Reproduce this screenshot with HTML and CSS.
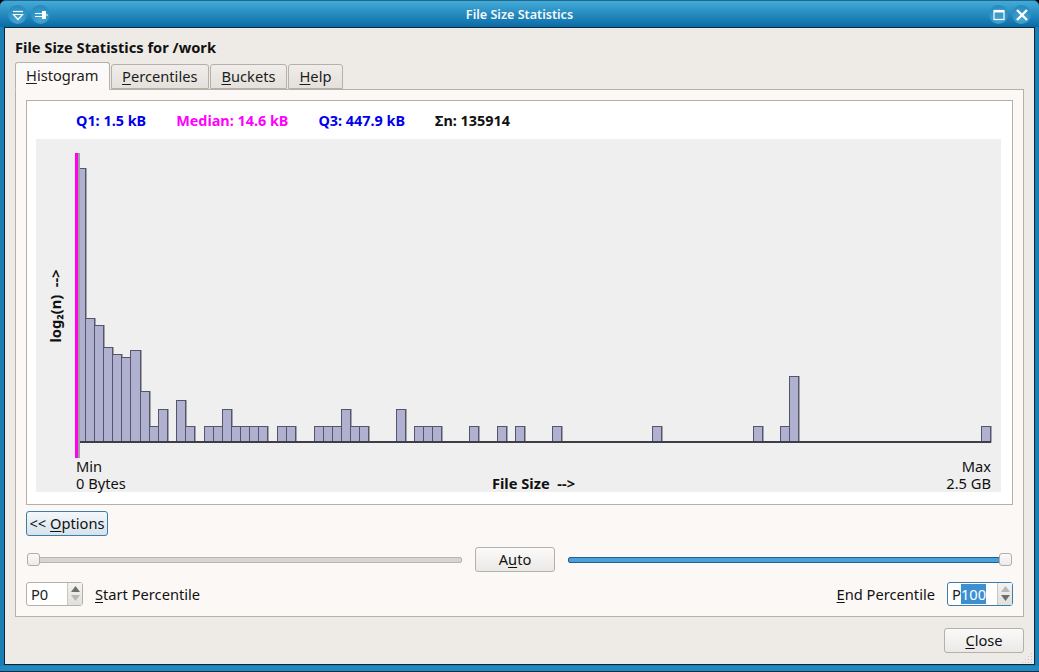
FILE: index.html
```html
<!DOCTYPE html>
<html lang="en">
<head>
<meta charset="utf-8">
<title>File Size Statistics</title>
<link rel="stylesheet" href="styles.css">
</head>
<body>
<div class="window">
  <header class="titlebar">
    <div class="wm-group">
      <span class="wm-btn"><svg width="14" height="14" viewBox="0 0 14 14"><path class="wm-line" d="M2 3.5h10"/><path class="wm-line" d="M2.5 6.5h9L7 11.5z"/></svg></span>
      <span class="wm-btn"><svg width="16" height="14" viewBox="0 0 16 14"><path class="wm-fill" d="M9 3h4v8H9z"/><path class="wm-line" d="M2 5.5h7M2 8.5h7M13 7h2"/></svg></span>
    </div>
    <div class="title">File Size Statistics</div>
    <div class="wm-group">
      <span class="wm-btn"><svg width="14" height="14" viewBox="0 0 14 14"><rect class="wm-line" x="2" y="2.5" width="10" height="9"/><path class="wm-line wm-thick" d="M2 3.5h10"/></svg></span>
      <span class="wm-btn"><svg width="14" height="14" viewBox="0 0 14 14"><path class="wm-x" d="M2 2l10 10M12 2L2 12"/></svg></span>
    </div>
  </header>

  <main class="client">
    <h1 class="heading">File Size Statistics for /work</h1>

    <nav class="tabs">
      <span class="tab tab-active"><span><u>H</u>istogram</span></span>
      <span class="tab"><span><u>P</u>ercentiles</span></span>
      <span class="tab"><span><u>B</u>uckets</span></span>
      <span class="tab"><span><u>H</u>elp</span></span>
    </nav>

    <section class="pane">
      <div class="plot-frame">
        <div class="stats">
          <span class="stat-blue">Q1: 1.5 kB</span>
          <span class="stat-magenta">Median: 14.6 kB</span>
          <span class="stat-blue">Q3: 447.9 kB</span>
          <span class="stat-black">Σn: 135914</span>
        </div>
        <div class="chart-wrap">
          <svg class="chart" width="965" height="353" viewBox="36 139 965 353">
            <g class="bars">
              <rect class="ghost" x="78" y="153" width="1" height="305"/>
              <rect x="78.5" y="168.5" width="7" height="273.5"/>
              <rect x="85.5" y="318.5" width="9" height="123.5"/>
              <rect x="94.5" y="325.5" width="9" height="116.5"/>
              <rect x="103.5" y="347.5" width="9" height="94.5"/>
              <rect x="112.5" y="354.5" width="9" height="87.5"/>
              <rect x="121.5" y="357.5" width="9" height="84.5"/>
              <rect x="130.5" y="350.5" width="10" height="91.5"/>
              <rect x="140.5" y="391.5" width="9" height="50.5"/>
              <rect x="149.5" y="426.5" width="9" height="15.5"/>
              <rect x="158.5" y="409.5" width="9" height="32.5"/>
              <rect x="176.5" y="400.5" width="9" height="41.5"/>
              <rect x="185.5" y="426.5" width="9" height="15.5"/>
              <rect x="204.5" y="426.5" width="9" height="15.5"/>
              <rect x="213.5" y="426.5" width="9" height="15.5"/>
              <rect x="222.5" y="409.5" width="9" height="32.5"/>
              <rect x="231.5" y="426.5" width="9" height="15.5"/>
              <rect x="240.5" y="426.5" width="9" height="15.5"/>
              <rect x="249.5" y="426.5" width="9" height="15.5"/>
              <rect x="258.5" y="426.5" width="9" height="15.5"/>
              <rect x="277.5" y="426.5" width="9" height="15.5"/>
              <rect x="286.5" y="426.5" width="9" height="15.5"/>
              <rect x="314.5" y="426.5" width="9" height="15.5"/>
              <rect x="323.5" y="426.5" width="9" height="15.5"/>
              <rect x="332.5" y="426.5" width="9" height="15.5"/>
              <rect x="341.5" y="409.5" width="9" height="32.5"/>
              <rect x="350.5" y="426.5" width="9" height="15.5"/>
              <rect x="359.5" y="426.5" width="9" height="15.5"/>
              <rect x="396.5" y="409.5" width="9" height="32.5"/>
              <rect x="414.5" y="426.5" width="9" height="15.5"/>
              <rect x="423.5" y="426.5" width="9" height="15.5"/>
              <rect x="432.5" y="426.5" width="9" height="15.5"/>
              <rect x="469.5" y="426.5" width="9" height="15.5"/>
              <rect x="497.5" y="426.5" width="9" height="15.5"/>
              <rect x="515.5" y="426.5" width="9" height="15.5"/>
              <rect x="552.5" y="426.5" width="9" height="15.5"/>
              <rect x="652.5" y="426.5" width="9" height="15.5"/>
              <rect x="753.5" y="426.5" width="9" height="15.5"/>
              <rect x="780.5" y="426.5" width="9" height="15.5"/>
              <rect x="789.5" y="376.5" width="9" height="65.5"/>
              <rect x="981.5" y="426.5" width="9" height="15.5"/>
            </g>
            <rect class="axis" x="80" y="441" width="911" height="2"/>
            <rect class="marker-shadow" x="78" y="153" width="2" height="305"/>
            <rect class="marker" x="75" y="153" width="3" height="305"/>
            <text class="label-y" transform="translate(61 306) rotate(-90)" xml:space="preserve">log₂(n)  --&gt;</text>
          </svg>
          <div class="x-labels">
            <div class="x-start">Min<br>0 Bytes</div>
            <div class="x-title">File Size  --&gt;</div>
            <div class="x-end">Max<br>2.5 GB</div>
          </div>
        </div>
      </div>

      <div class="options-row">
        <button class="btn btn-options" type="button"><span>&lt;&lt; <u>O</u>ptions</span></button>
      </div>

      <div class="slider-row">
        <div class="slider slider-start">
          <span class="handle"></span>
          <span class="groove"></span>
        </div>
        <button class="btn btn-auto" type="button"><span>A<u>u</u>to</span></button>
        <div class="slider slider-end">
          <span class="groove groove-on"></span>
          <span class="handle"></span>
        </div>
      </div>

      <div class="percentile-row">
        <div class="group">
          <div class="spin spin-start">
            <span class="spin-text">P0</span>
            <span class="spin-arrows">
              <svg width="9" height="6" viewBox="0 0 9 6"><path class="arrow-dark" d="M4.5 0L9 6H0z"/></svg>
              <svg width="9" height="6" viewBox="0 0 9 6"><path class="arrow-light" d="M0 0h9L4.5 6z"/></svg>
            </span>
          </div>
          <span class="spin-label"><u>S</u>tart Percentile</span>
        </div>
        <div class="group">
          <span class="spin-label"><u>E</u>nd Percentile</span>
          <div class="spin spin-end">
            <span class="spin-text">P<span class="selected">100</span></span>
            <span class="spin-arrows">
              <svg width="9" height="6" viewBox="0 0 9 6"><path class="arrow-light" d="M4.5 0L9 6H0z"/></svg>
              <svg width="9" height="6" viewBox="0 0 9 6"><path class="arrow-dark" d="M0 0h9L4.5 6z"/></svg>
            </span>
          </div>
        </div>
      </div>
    </section>

    <footer class="footer">
      <button class="btn btn-close" type="button"><span><u>C</u>lose</span></button>
    </footer>
    <svg class="grip" width="12" height="12" viewBox="0 0 12 12"><path d="M9 1h1v1H9zM6 4h1v1H6zM9 4h1v1H9zM3 7h1v1H3zM6 7h1v1H6zM9 7h1v1H9zM0 10h1v1H0zM3 10h1v1H3zM6 10h1v1H6zM9 10h1v1H9z"/></svg>
  </main>
</div>
</body>
</html>
```
FILE: styles.css
```css
* { box-sizing: border-box; }

html, body {
  margin: 0;
  padding: 0;
  width: 1039px;
  height: 672px;
  overflow: hidden;
  background: #000;
}

body {
  font-family: "Noto Sans", "Open Sans", sans-serif;
  font-size: 14.67px;
  color: #111;
}

.window {
  width: 1039px;
  height: 672px;
  display: flex;
  flex-direction: column;
  padding: 0 3px 6px;
  border-radius: 6px 6px 0 0;
  background: #1b7fb5;
  border-bottom: 1px solid #0a2f45;
  box-shadow: inset 0 -5px 0 #2389bf;
}

.titlebar {
  height: 27px;
  margin: 0 -3px;
  padding: 1px 8px 0 8px;
  flex: none;
  display: flex;
  align-items: center;
  justify-content: space-between;
  border-radius: 6px 6px 0 0;
  background: linear-gradient(#43abd8, #0a6ba6);
  border-top: 1px solid #23648a;
  position: relative;
}

.title {
  position: absolute;
  left: 0;
  right: 0;
  text-align: center;
  color: #f4f7f9;
  font-size: 12.6px;
  font-weight: 600;
}

.wm-group { display: flex; gap: 4px; }

.wm-btn {
  width: 19px;
  height: 19px;
  border-radius: 50%;
  display: flex;
  align-items: center;
  justify-content: center;
  background: radial-gradient(circle at 50% 75%, #44a6d3, #1e83b8);
}

.wm-line { fill: none; stroke: #fff; stroke-width: 1.2; }
.wm-thick { stroke-width: 2; }
.wm-fill { fill: #fff; }
.wm-x { fill: none; stroke: #fff; stroke-width: 2.4; }

.client {
  flex: 1;
  position: relative;
  display: flex;
  flex-direction: column;
  margin-right: 1px;
  margin-left: 1px;
  padding: 0 10px;
  background: #eeebe7;
  border: 1px solid #06283c;
}

.heading {
  margin: 0;
  height: 34px;
  padding-top: 9px;
  font-size: 14.67px;
  line-height: 20px;
  font-weight: 700;
  color: #111;
}

.tabs {
  display: flex;
  height: 27px;
  flex: none;
  align-items: flex-end;
  position: relative;
  z-index: 1;
}

.tab {
  height: 25px;
  padding: 0 10.5px 2px;
  display: flex;
  align-items: center;
  margin-right: 1px;
  background: linear-gradient(#f0edea, #e4e1dc);
  border: 1px solid #b5b0aa;
  border-radius: 3px 3px 0 0;
  color: #1c1c1c;
}

.tab-active {
  height: 28px;
  margin-bottom: -1px;
  padding: 0 10px 2px;
  background: linear-gradient(#fbfafa, #fcf8f5);
  border-bottom-color: #fcf8f5;
}

.pane {
  width: 1009px;
  height: 528px;
  flex: none;
  padding: 10px 10px 0;
  background: #fcf8f5;
  border: 1px solid #b5b0aa;
}

.plot-frame {
  height: 405px;
  background: #fff;
  border: 1px solid #b5b0aa;
  padding: 0 11px 12px 9px;
  display: flex;
  flex-direction: column;
}

.stats {
  height: 38px;
  padding: 0 0 0 40px;
  display: flex;
  align-items: center;
  gap: 30px;
  font-size: 14.4px;
  font-weight: 700;
  flex: none;
}

.stat-blue { color: #0000ee; }
.stat-magenta { color: #ff00ff; }
.stat-black { color: #111; }

.chart-wrap {
  position: relative;
  flex: none;
}

.chart {
  display: block;
  background: #efefef;
}

.bars rect {
  fill: #b0b0d0;
  stroke: #55556a;
  stroke-width: 1;
}

.bars { filter: drop-shadow(1px 0 0 rgba(100, 100, 110, 0.55)); }

.bars .ghost { fill: #a8a8a8; stroke: none; }

.axis { fill: #3e3e46; }
.marker { fill: #ff00f0; }
.marker-shadow { fill: #a0a0a0; }

.label-y {
  font-family: "Noto Sans", "Open Sans", sans-serif;
  font-size: 14.67px;
  font-weight: 700;
  fill: #111;
  text-anchor: middle;
  white-space: pre;
}

.x-labels {
  position: absolute;
  left: 40px;
  right: 10px;
  bottom: 0;
  display: grid;
  grid-template-columns: 1fr auto 1fr;
  align-items: end;
  line-height: 17px;
}

.x-title { font-weight: 700; white-space: pre; }
.x-end { text-align: right; }

.options-row {
  height: 25px;
  margin-top: 6px;
  display: flex;
}

.btn {
  font: inherit;
  color: #111;
  border: 1px solid #b5b0aa;
  border-radius: 3px;
  background: linear-gradient(#fbfafa, #ebe9e6);
  padding: 0 0 1px;
  display: flex;
  align-items: center;
  justify-content: center;
  height: 25px;
}

.btn-options {
  width: 82px;
  border-color: #3b7ea8;
  background: linear-gradient(#f4f8fb, #d6e2ea);
}

.slider-row {
  height: 25px;
  margin-top: 11px;
  display: flex;
  align-items: center;
  gap: 13px;
}

.slider {
  display: flex;
  align-items: center;
}

.slider-start { flex: 1; padding-left: 1px; }
.slider-end { flex: 0 0 445px; padding-right: 1px; }

.btn-auto { width: 80px; flex: none; }

.groove {
  flex: 1;
  height: 6px;
  margin-left: -1px;
  background: #d9d6d1;
  border: 1px solid #b8b4ae;
  border-radius: 2px;
}

.groove-on {
  margin-left: 0;
  margin-right: -1px;
  background: #4a9fdc;
  border-color: #1f618d;
}

.handle {
  width: 13px;
  height: 13px;
  flex: none;
  position: relative;
  z-index: 1;
  border: 1px solid #b0aca6;
  border-radius: 3px;
  background: linear-gradient(#fbfafa, #ecebe8);
}

.percentile-row {
  height: 25px;
  margin-top: 9px;
  display: flex;
  justify-content: space-between;
  align-items: center;
}

.group {
  display: flex;
  align-items: center;
  gap: 12px;
}

.spin {
  height: 24px;
  display: flex;
  align-items: stretch;
  background: #fff;
  border: 1px solid #b5b0aa;
  border-radius: 3px;
}

.spin-start { width: 57px; }
.spin-end { width: 66px; border-color: #3b7ea8; }

.spin-text {
  flex: 1;
  padding-left: 4px;
  line-height: 22px;
  color: #222;
}

.selected {
  background: #3d8fd1;
  color: #fff;
}

.spin-arrows {
  width: 15px;
  display: flex;
  flex-direction: column;
  align-items: center;
  justify-content: center;
  gap: 3px;
  background: linear-gradient(#f4f3f1, #e2e0dc);
  border-left: 1px solid #c9c5bf;
}

.spin-arrows svg { display: block; }

.arrow-dark { fill: #6e6e6e; }
.arrow-light { fill: #b8b8b8; }

.footer {
  flex: 1;
  display: flex;
  justify-content: flex-end;
  align-items: flex-start;
  padding-top: 11px;
}

.btn-close { width: 80px; }

.grip {
  position: absolute;
  right: 0;
  bottom: 0;
  fill: #c8c4be;
}

u { text-underline-offset: 2px; }
```
